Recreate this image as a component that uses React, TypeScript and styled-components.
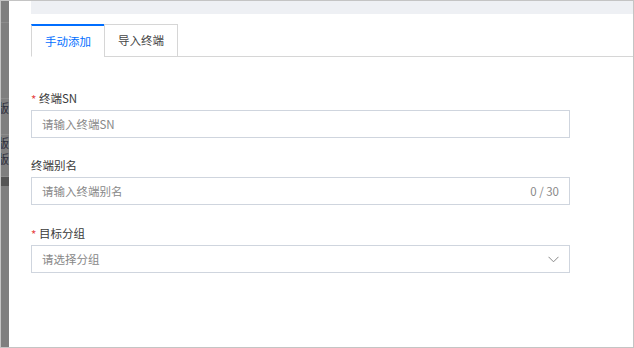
import styled, { createGlobalStyle } from "styled-components";

const GlobalStyle = createGlobalStyle`
  html, body {
    margin: 0;
    padding: 0;
    background: #ffffff;
  }
  body {
    font-family: "Noto Sans CJK SC", "Noto Sans", sans-serif;
    font-size: 11.5px;
    color: #333333;
  }
  * {
    box-sizing: border-box;
  }
`;

const Frame = styled.div`
  display: flex;
  width: 634px;
  height: 348px;
  border: 1px solid #c4c4c4;
  overflow: hidden;
`;

const Backdrop = styled.div`
  width: 8px;
  flex: none;
  display: flex;
  flex-direction: column;
  background: #7f7f7f;
`;

const BackdropRow = styled.div<{ $h: number; $dark?: boolean; $line?: boolean }>`
  height: ${(p) => p.$h}px;
  flex: none;
  display: flex;
  justify-content: flex-end;
  align-items: center;
  overflow: hidden;
  background: ${(p) => (p.$dark ? "#555555" : "transparent")};
  border-bottom: ${(p) => (p.$line ? "1px solid #8c8c8c" : "none")};
  font-size: 12px;
  line-height: 12px;
  color: #2e2e3a;
  white-space: nowrap;
`;

const Panel = styled.div`
  flex: 1;
  display: flex;
  flex-direction: column;
  padding-left: 22px;
  background: #ffffff;
`;

const TopBar = styled.div`
  height: 13px;
  background: #eef0f4;
`;

const TabBar = styled.div`
  display: flex;
  margin-top: 10px;
  border-bottom: 1px solid #d6d6d6;
`;

const Tab = styled.div<{ $active?: boolean }>`
  width: 74px;
  height: 33px;
  margin-bottom: -1px;
  margin-left: ${(p) => (p.$active ? "0" : "-1px")};
  display: flex;
  align-items: center;
  justify-content: center;
  border: 1px solid #d6d6d6;
  border-top: ${(p) => (p.$active ? "2px solid #006eff" : "1px solid #d6d6d6")};
  border-bottom: ${(p) => (p.$active ? "1px solid #ffffff" : "1px solid #d6d6d6")};
  background: #ffffff;
  color: ${(p) => (p.$active ? "#006eff" : "#444444")};
  padding-bottom: ${(p) => (p.$active ? "0" : "1px")};
`;

const Form = styled.div`
  width: 539px;
  padding-top: 31px;
  display: flex;
  flex-direction: column;
  gap: 17px;
`;

const Field = styled.div<{ $shift?: number }>`
  display: flex;
  flex-direction: column;
  margin-top: ${(p) => p.$shift ?? 0}px;
`;

const Label = styled.div`
  height: 20px;
  line-height: 20px;
  margin-bottom: 2px;
  display: flex;
  align-items: center;
  color: #3a3a3a;
`;

const Star = styled.span`
  color: #e54545;
  width: 8px;
  margin-top: 2px;
`;

const InputBox = styled.div`
  height: 28px;
  border: 1px solid #cfd5de;
  display: flex;
  align-items: center;
  justify-content: space-between;
  padding: 0 10px;
  background: #ffffff;
`;

const Placeholder = styled.span`
  color: #888888;
`;

const Counter = styled.span`
  color: #888888;
`;

const Chevron = () => (
  <svg width="11" height="7" viewBox="0 0 11 7" fill="none">
    <path d="M0.5 0.8 L5.5 5.8 L10.5 0.8" stroke="#888888" strokeWidth="1" />
  </svg>
);

export default function App() {
  return (
    <>
      <GlobalStyle />
      <Frame>
        <Backdrop>
          <BackdropRow $h={22} $line />
          <BackdropRow $h={76} $line />
          <BackdropRow $h={18}>版</BackdropRow>
          <BackdropRow $h={18} $line />
          <BackdropRow $h={16}>版</BackdropRow>
          <BackdropRow $h={16}>版</BackdropRow>
          <BackdropRow $h={10} $line />
          <BackdropRow $h={9} $dark />
        </Backdrop>
        <Panel>
          <TopBar />
          <TabBar>
            <Tab $active>手动添加</Tab>
            <Tab>导入终端</Tab>
          </TabBar>
          <Form>
            <Field>
              <Label>
                <Star>*</Star>终端SN
              </Label>
              <InputBox>
                <Placeholder>请输入终端SN</Placeholder>
              </InputBox>
            </Field>
            <Field>
              <Label>终端别名</Label>
              <InputBox>
                <Placeholder>请输入终端别名</Placeholder>
                <Counter>0 / 30</Counter>
              </InputBox>
            </Field>
            <Field $shift={1}>
              <Label>
                <Star>*</Star>目标分组
              </Label>
              <InputBox>
                <Placeholder>请选择分组</Placeholder>
                <Chevron />
              </InputBox>
            </Field>
          </Form>
        </Panel>
      </Frame>
    </>
  );
}
